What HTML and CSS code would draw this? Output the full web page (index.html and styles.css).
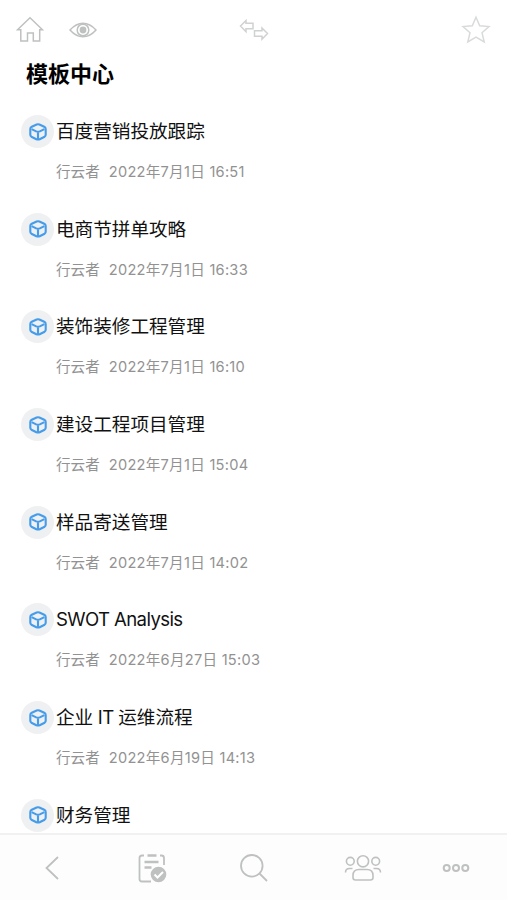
FILE: index.html
```html
<!DOCTYPE html>
<html lang="zh-CN">
<head>
  <meta charset="utf-8">
  <title>模板中心</title>
  <link rel="stylesheet" href="styles.css">
</head>
<body>
  <svg class="defs" width="0" height="0">
    <symbol id="cube" viewBox="0 0 18 18">
      <path d="M7.6 1.5Q9 .9 10.4 1.5L15.2 3.7Q16.7 4.5 16.7 6V11.8Q16.7 13 15.6 13.7L10.6 16.2Q9 16.9 7.4 16.2L2.4 13.7Q1.3 13 1.3 11.8V6Q1.3 4.5 2.8 3.7Z"/>
      <path d="M2.6 6.1 7.2 8.4Q9 9.2 10.8 8.4L15.4 6.1 M9 9.2V16"/>
    </symbol>
  </svg>

  <header class="topbar">
    <svg class="home" width="28" height="28" viewBox="0 0 28 28"><path d="M1.5 13.8 14 1.8 26.5 13.8H23.7V25H17.3V17H11.5V25H4.8V13.8Z"/></svg>
    <svg class="eye" width="28" height="16" viewBox="0 0 28 16"><path d="M1 8Q7 1.2 14 1.2T27 8Q21 14.8 14 14.8T1 8Z"/><circle cx="14" cy="8" r="5.8"/><circle class="fill" cx="14" cy="8" r="3.4"/></svg>
    <svg class="swap" width="30" height="24" viewBox="0 0 30 24"><path d="M1.5 8 7 2.5V5.3H14V10.8H7V13.7Z M28.5 15.5 23 10V12.8H15.5V18.2H23V21.2Z"/></svg>
    <svg class="star" width="30" height="29" viewBox="0 0 30 29"><path d="M15 2.2 18.7 10.7 28 11.5 21 17.7 23.2 27 15 22.1 6.8 27 9 17.7 2 11.5 11.3 10.7Z"/></svg>
  </header>

  <main class="content">
    <h1>模板中心</h1>
    <ul class="list">
      <li class="item">
        <span class="avatar"><svg><use href="#cube"/></svg></span>
        <h2>百度营销投放跟踪</h2>
        <p><span class="author">行云者</span><time>2022年7月1日 16:51</time></p>
      </li>
      <li class="item">
        <span class="avatar"><svg><use href="#cube"/></svg></span>
        <h2>电商节拼单攻略</h2>
        <p><span class="author">行云者</span><time>2022年7月1日 16:33</time></p>
      </li>
      <li class="item">
        <span class="avatar"><svg><use href="#cube"/></svg></span>
        <h2>装饰装修工程管理</h2>
        <p><span class="author">行云者</span><time>2022年7月1日 16:10</time></p>
      </li>
      <li class="item">
        <span class="avatar"><svg><use href="#cube"/></svg></span>
        <h2>建设工程项目管理</h2>
        <p><span class="author">行云者</span><time>2022年7月1日 15:04</time></p>
      </li>
      <li class="item">
        <span class="avatar"><svg><use href="#cube"/></svg></span>
        <h2>样品寄送管理</h2>
        <p><span class="author">行云者</span><time>2022年7月1日 14:02</time></p>
      </li>
      <li class="item">
        <span class="avatar"><svg><use href="#cube"/></svg></span>
        <h2><span class="latin">SWOT Analysis</span></h2>
        <p><span class="author">行云者</span><time>2022年6月27日 15:03</time></p>
      </li>
      <li class="item">
        <span class="avatar"><svg><use href="#cube"/></svg></span>
        <h2>企业<span class="latin"> IT </span>运维流程</h2>
        <p><span class="author">行云者</span><time>2022年6月19日 14:13</time></p>
      </li>
      <li class="item">
        <span class="avatar"><svg><use href="#cube"/></svg></span>
        <h2>财务管理</h2>
      </li>
    </ul>
  </main>

  <nav class="tabbar">
    <svg width="16" height="26" viewBox="0 0 16 26"><path d="M14 2 2.5 13 14 24"/></svg>
    <svg class="task" width="30" height="32" viewBox="0 0 30 32">
      <path d="M7 3.5H5Q2.5 3.5 2.5 6V27Q2.5 29.5 5 29.5H14 M23 3.5H24.5Q27 3.5 27 6V13"/>
      <path class="thick" d="M10.5 3.5H19.5 M7.5 10H21.5 M7.5 15.5H14.5"/>
      <circle class="fill" cx="21.5" cy="22.5" r="7.8"/>
      <path class="check" d="M17.5 22.5 20.5 25.5 26 20"/>
    </svg>
    <svg width="30" height="30" viewBox="0 0 30 30"><circle cx="12.8" cy="12.8" r="10.8"/><path d="M20.5 20.5 28 28"/></svg>
    <svg class="people" width="38" height="28" viewBox="0 0 38 28">
      <circle cx="19" cy="7.3" r="5.6"/><circle cx="6.3" cy="7.3" r="3.9"/><circle cx="31.7" cy="7.3" r="3.9"/>
      <path d="M9 23.5V21.5Q9 15.5 15 15.5H23Q29 15.5 29 21.5V23.5Q29 26 26.5 26H11.5Q9 26 9 23.5Z M1.5 18.5Q1.5 14.5 5.5 14.5H8.5 M36.5 18.5Q36.5 14.5 32.5 14.5H29.5"/>
    </svg>
    <svg class="dots" width="28" height="10" viewBox="0 0 28 10"><circle cx="4.7" cy="5" r="3"/><circle cx="14" cy="5" r="3"/><circle cx="23.3" cy="5" r="3"/></svg>
  </nav>
</body>
</html>
```

FILE: styles.css
```css
body {
  display: flex;
  flex-direction: column;
  height: 900px;
  margin: 0;
  overflow: hidden;
  background: #fff;
  color: #111;
  font-family: Inter, "Noto Sans CJK SC", sans-serif;
}

svg {
  display: block;
  flex: none;
  fill: none;
  stroke: #bfc1c1;
  stroke-width: 1.5;
}

.defs {
  position: absolute;
}

.fill {
  fill: #bfc1c1;
  stroke: none;
}

.topbar {
  display: flex;
  align-items: center;
  flex: none;
  height: 60px;
  box-sizing: border-box;
  padding: 0 16px 1px;
}

.eye {
  margin-left: 25px;
}

.swap {
  margin-left: 142px;
  stroke: #d0d1d1;
}

.star {
  margin-left: auto;
  stroke: #d9dbdb;
}

.content {
  flex: 1;
  min-height: 0;
  overflow: hidden;
}

h1 {
  margin: 0 0 26px 26px;
  font-size: 22px;
  font-weight: 700;
  line-height: 29px;
  color: #000;
}

.list {
  margin: 0;
  padding: 0 0 0 21px;
  list-style: none;
}

.item {
  display: grid;
  grid-template-columns: 33px 1fr;
  grid-template-rows: 33px 48px;
  column-gap: 2px;
  height: 97.7px;
}

.avatar {
  display: flex;
  align-items: center;
  justify-content: center;
  width: 33px;
  height: 33px;
  border-radius: 50%;
  background: #eff0f1;
}

.avatar svg {
  width: 18px;
  height: 18px;
  stroke: #459cea;
  stroke-width: 2.1;
  stroke-linejoin: round;
}

h2 {
  margin: 0;
  font-size: 18.6px;
  font-weight: 400;
  line-height: 32px;
}

.latin {
  letter-spacing: -0.62px;
}

.item p {
  grid-column: 2;
  margin: 0;
  font-size: 14.6px;
  line-height: 48px;
  color: #929292;
}

.author {
  margin-right: 9px;
}

.item time {
  letter-spacing: 0.26px;
}

.tabbar {
  display: grid;
  grid-template-columns: 104px 96px 108px 110px 76px;
  align-items: center;
  justify-items: center;
  flex: none;
  height: 67px;
  box-sizing: border-box;
  border-top: 2px solid #f1f1f1;
  background: #fdfdfd;
}

.tabbar svg {
  stroke-width: 1.8;
}

.tabbar .people {
  stroke-width: 1.6;
}

.tabbar .thick {
  stroke-width: 2.4;
}

.tabbar .check {
  stroke: #fff;
  stroke-width: 2;
}

.tabbar .dots {
  stroke-width: 2;
}
```
